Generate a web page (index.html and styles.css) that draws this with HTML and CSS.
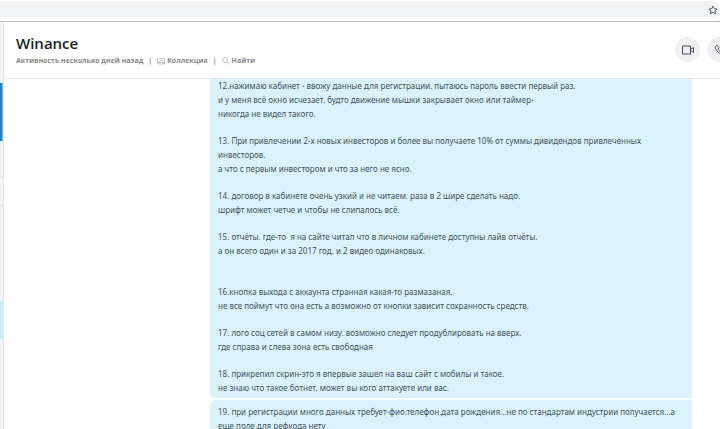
FILE: index.html
```html
<!DOCTYPE html>
<html lang="ru">
<head>
  <meta charset="UTF-8">
  <meta name="viewport" content="width=device-width, initial-scale=1.0">
  <title>Winance</title>
  <link rel="stylesheet" href="styles.css">
</head>
<body>

<div class="browser-bar">
  <div class="address">
    <button class="star" aria-label="Добавить в закладки">
      <svg width="10" height="10" viewBox="0 0 20 20"><path d="M10 2l2.400 5.400 5.800.6-4.400 3.900 1.300 5.800L10 14.700l-5.100 3 1.300-5.800L1.800 8l5.800-.6z"/></svg>
    </button>
  </div>
</div>

<div class="app">
  <aside class="sidebar">
    <div class="item item-active"></div>
    <div class="item item-line"></div>
    <div class="item item-head"></div>
    <div class="item item-selected"></div>
  </aside>

  <main class="chat">
    <header class="chat-header">
      <div class="info">
        <h1>Winance</h1>
        <div class="status">
          <span>Активность несколько дней назад</span>
          <span class="sep">|</span>
          <a href="#">
            <svg width="8" height="8" viewBox="0 0 16 16"><path d="M1 3h14v8h-14zM3 11v3h12v-3M4 10l4-4 5 4"/></svg>
            Коллекция
          </a>
          <span class="sep">|</span>
          <a href="#">
            <svg width="8" height="8" viewBox="0 0 16 16"><circle cx="6.500" cy="6.500" r="5"/><path d="M10 10l5 5"/></svg>
            Найти
          </a>
        </div>
      </div>
      <div class="calls">
        <button class="call" aria-label="Видеозвонок">
          <svg width="14" height="12" viewBox="0 0 14 12"><path d="M1.500 2h8v8h-8zM9.500 5.500l3-2v5l-3-2"/></svg>
        </button>
        <button class="call" aria-label="Звонок">
          <svg width="12" height="12" viewBox="0 0 14 14"><path d="M3.500 1.200L1.600 2.800c-.5 4 5.300 10 9.600 9.600l1.600-1.900-2.900-2.300-1.700 1.200C6.600 8.600 5.400 7.400 4.700 5.900l1.200-1.700z"/></svg>
        </button>
      </div>
    </header>

    <section class="messages">
      <div class="message message-long">
        <p>12.нажимаю кабинет - ввожу данные для регистрации. пытаюсь пароль ввести первый раз.<br>
        и у меня всё окно исчезает. будто движение мышки закрывает окно или таймер-<br>
        никогда не видел такого.</p>
        <p>13. При привлечении 2-х новых инвесторов и более вы получаете 10% от суммы дивидендов привлеченных<br>
        инвесторов.<br>
        а что с первым инвестором и что за него не ясно.</p>
        <p>14. договор в кабинете очень узкий и не читаем. раза в 2 шире сделать надо.<br>
        шрифт может четче и чтобы не слипалось всё.</p>
        <p>15. отчёты. где-то&nbsp; я на сайте читал что в личном кабинете доступны лайв отчёты.<br>
        а он всего один и за 2017 год. и 2 видео одинаковых.<br><br></p>
        <p>16.кнопка выхода с аккаунта странная какая-то размазаная.<br>
        не все поймут что она есть а возможно от кнопки зависит сохранность средств.</p>
        <p>17. лого соц сетей в самом низу. возможно следует продублировать на вверх.<br>
        где справа и слева зона есть свободная</p>
        <p>18. прикрепил скрин-это я впервые зашел на ваш сайт с мобилы и такое.<br>
        не знаю что такое ботнет. может вы кого аттакуете или вас.</p>
      </div>
      <div class="message">
        <p>19. при регистрации много данных требует-фио.телефон.дата рождения...не по стандартам индустрии получается...а<br>
        еще поле для рефкода нету</p>
      </div>
    </section>
  </main>
</div>

</body>
</html>
```
FILE: styles.css
```css
* {
  box-sizing: border-box;
}

body {
  margin: 0;
  height: 100vh;
  display: flex;
  flex-direction: column;
  overflow: hidden;
  background: #fff;
  color: #44525a;
  font-family: "Open Sans", "Noto Sans", sans-serif;
  font-size: 8px;
  line-height: 14px;
}

button {
  border: none;
  padding: 0;
  display: flex;
  align-items: center;
  justify-content: center;
  cursor: pointer;
}

svg {
  fill: none;
  stroke: currentColor;
}

.browser-bar {
  flex: none;
  padding: 1px 0 3px;
  border-bottom: 1px solid #c2c3c5;
}

.address {
  display: flex;
  justify-content: flex-end;
  height: 17px;
  padding-right: 2px;
  background: #f1f3f4;
  border-radius: 0 8px 8px 0;
}

.star {
  background: none;
  color: #5f6368;
}

.star svg {
  stroke-width: 2;
}

.app {
  flex: 1;
  display: flex;
  min-height: 0;
}

.sidebar {
  flex: none;
  width: 4px;
  padding-top: 61px;
  background: #eff3fa;
  border-right: 1px solid #e4e6eb;
}

.item-active {
  height: 58px;
  background: #1683dc;
  border-right: 1px solid #7db9ec;
}

.item-line {
  height: 37px;
  border-bottom: 2px solid #e6e9f0;
}

.item-head {
  height: 28px;
  border-bottom: 1px solid #dbdfe6;
}

.item-selected {
  height: 38px;
  margin-top: 95px;
  background: #c7eefd;
}

.chat {
  flex: 1;
  min-width: 0;
  display: flex;
  flex-direction: column;
}

.chat-header {
  flex: none;
  display: flex;
  justify-content: space-between;
  height: 57px;
  padding: 12px 0 0 12px;
  overflow: hidden;
  border-bottom: 1px solid #e6e7e9;
}

h1 {
  margin: 0;
  font-size: 15px;
  line-height: 18px;
  font-weight: 600;
  color: #1b1f25;
}

.status {
  display: flex;
  gap: 5px;
  margin-top: 2px;
  font-size: 7px;
  font-weight: 700;
  color: #85888d;
  white-space: nowrap;
}

.status a {
  display: flex;
  align-items: center;
  gap: 2px;
  color: inherit;
  text-decoration: none;
}

.calls {
  display: flex;
  gap: 7px;
  margin: 3px -12px 0 0;
}

.call {
  width: 25px;
  height: 25px;
  border-radius: 50%;
  background: #f0f0f4;
  color: #4b4f5c;
}

.messages {
  flex: 1;
  min-height: 0;
  overflow: hidden;
  padding: 0 28px 0 206px;
  font-family: "Noto Sans", "Open Sans", sans-serif;
}

.message {
  margin-bottom: 2px;
  padding: 5px 8px 3px;
  border-radius: 6px 0 0 6px;
  background: #daf2fc;
}

.message-long {
  padding-top: 0;
  border-top-left-radius: 0;
}

.message p {
  margin: 0 0 13px;
}

.message p:last-child {
  margin-bottom: 0;
}
```
